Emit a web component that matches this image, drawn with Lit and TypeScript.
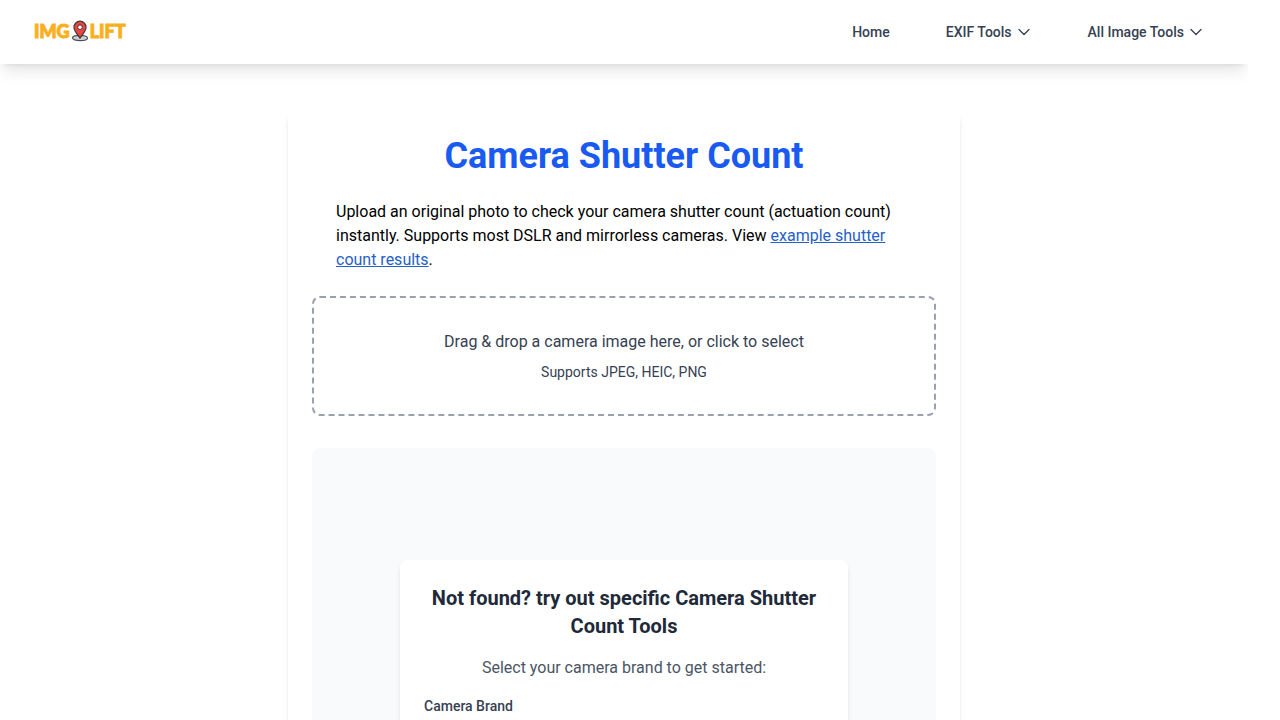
import { LitElement, html, css, svg } from "lit";
import { customElement } from "lit/decorators.js";

const chevron = html`<svg class="chevron" viewBox="0 0 16 16" aria-hidden="true">
  ${svg`<path d="M3 5.5 8 10.5 13 5.5" fill="none" stroke="currentColor" stroke-width="1.3" stroke-linecap="round" stroke-linejoin="round" />`}
</svg>`;

@customElement("site-header")
export class SiteHeader extends LitElement {
  static styles = css`
    :host {
      display: block;
      background: #fff;
      box-shadow: 0 10px 15px -3px rgb(0 0 0 / 0.1), 0 4px 6px -4px rgb(0 0 0 / 0.1);
    }
    .bar {
      display: flex;
      align-items: center;
      justify-content: space-between;
      height: 64px;
      padding: 0 32px;
    }
    .logo {
      display: flex;
      align-items: center;
      padding: 0 2px 2px;
      color: #f9b01e;
      font: 900 18px/24px Lato, sans-serif;
      -webkit-text-stroke: 1px #f9b01e;
      stroke-linejoin: round;
      text-decoration: none;
    }
    .pin {
      width: 20px;
      height: 22px;
    }
    .menu {
      display: flex;
      gap: 32px;
    }
    .item {
      display: flex;
      align-items: center;
      gap: 4px;
      padding: 8px 12px;
      border: 0;
      background: none;
      color: #364153;
      font: 500 14px/20px Roboto, sans-serif;
      text-decoration: none;
      cursor: pointer;
    }
    .chevron {
      width: 16px;
      height: 16px;
    }
  `;

  render() {
    return html`
      <header class="bar">
        <a class="logo" href="#"
          ><span>IMG</span
          ><svg class="pin" viewBox="0 0 20 22" aria-hidden="true">
            <ellipse cx="10" cy="18" rx="7.5" ry="2.6" fill="#c9d3d4" stroke="#4a4f55" stroke-width="1.2" />
            <path d="M10 18.2C8.5 15 4 11.8 4 7.2a6 6 0 0 1 12 0C16 11.8 11.5 15 10 18.2Z" fill="#e5483f" stroke="#4b3238" stroke-width="1.2" stroke-linejoin="round" />
            <circle cx="10" cy="7.2" r="2.3" fill="#fff" stroke="#4b3238" stroke-width="1" /></svg
          ><span>LIFT</span></a
        >
        <nav class="menu">
          <a class="item" href="#">Home</a>
          <button class="item" type="button">EXIF Tools ${chevron}</button>
          <button class="item" type="button">All Image Tools ${chevron}</button>
        </nav>
      </header>
    `;
  }
}

@customElement("brand-picker")
export class BrandPicker extends LitElement {
  static styles = css`
    :host {
      display: block;
      box-sizing: border-box;
      width: 100%;
      max-width: 448px;
      margin: 0 auto;
      padding: 24px;
      border-radius: 8px;
      background: #fff;
      box-shadow: 0 4px 6px -1px rgb(0 0 0 / 0.1), 0 2px 4px -2px rgb(0 0 0 / 0.1);
    }
    .title {
      margin: 0 0 16px;
      color: #1e2939;
      font-size: 20px;
      font-weight: 700;
      line-height: 28px;
      text-align: center;
    }
    .hint {
      margin: 0 0 16px;
      color: #4a5565;
      text-align: center;
    }
    .label {
      display: block;
      margin-bottom: 8px;
      color: #364153;
      font-size: 14px;
      font-weight: 500;
      line-height: 20px;
    }
    .select {
      width: 100%;
      height: 40px;
      border: 1px solid #d1d5dc;
      border-radius: 6px;
      background: #fff;
      font: inherit;
    }
  `;

  render() {
    return html`
      <h2 class="title">Not found? try out specific Camera Shutter Count Tools</h2>
      <p class="hint">Select your camera brand to get started:</p>
      <label class="label" for="brand">Camera Brand</label>
      <select class="select" id="brand"></select>
    `;
  }
}

@customElement("app-root")
export class AppRoot extends LitElement {
  static styles = css`
    :host {
      display: block;
      height: 100vh;
      overflow-x: hidden;
      overflow-y: auto;
      scrollbar-width: none;
      background: #fff;
      color: #000;
      font: 400 16px/24px Roboto, sans-serif;
    }
    .page {
      margin-right: 32px;
      overflow: hidden;
    }
    .card {
      box-sizing: border-box;
      max-width: 672px;
      margin: 48px auto;
      padding: 24px;
      border-radius: 8px;
      background: #fff;
      box-shadow: 0 4px 6px -1px rgb(0 0 0 / 0.1), 0 2px 4px -2px rgb(0 0 0 / 0.1);
    }
    .title {
      margin: 0 0 24px;
      color: #195bf0;
      font-size: 36px;
      font-weight: 700;
      line-height: 40px;
      text-align: center;
    }
    .intro {
      margin: 0 0 24px;
      padding: 0 24px;
    }
    .link {
      color: #265fc8;
      text-decoration: underline;
    }
    .drop {
      display: grid;
      gap: 8px;
      width: 100%;
      padding: 32px;
      border: 2px dashed #99a1af;
      border-radius: 8px;
      background: none;
      color: #364153;
      font: inherit;
      cursor: pointer;
    }
    .formats {
      font-size: 14px;
      line-height: 20px;
    }
    .panel {
      margin-top: 32px;
      padding: 112px 24px;
      border-radius: 8px;
      background: #f9fafb;
    }
  `;

  render() {
    return html`
      <div class="page">
        <site-header></site-header>
        <main class="card">
          <h1 class="title">Camera Shutter Count</h1>
          <p class="intro">
            Upload an original photo to check your camera shutter count (actuation count) instantly. Supports most DSLR
            and mirrorless cameras. View <a class="link" href="#">example shutter count results</a>.
          </p>
          <button class="drop" type="button">
            <span>Drag &amp; drop a camera image here, or click to select</span>
            <span class="formats">Supports JPEG, HEIC, PNG</span>
          </button>
          <section class="panel">
            <brand-picker></brand-picker>
          </section>
        </main>
      </div>
    `;
  }
}
